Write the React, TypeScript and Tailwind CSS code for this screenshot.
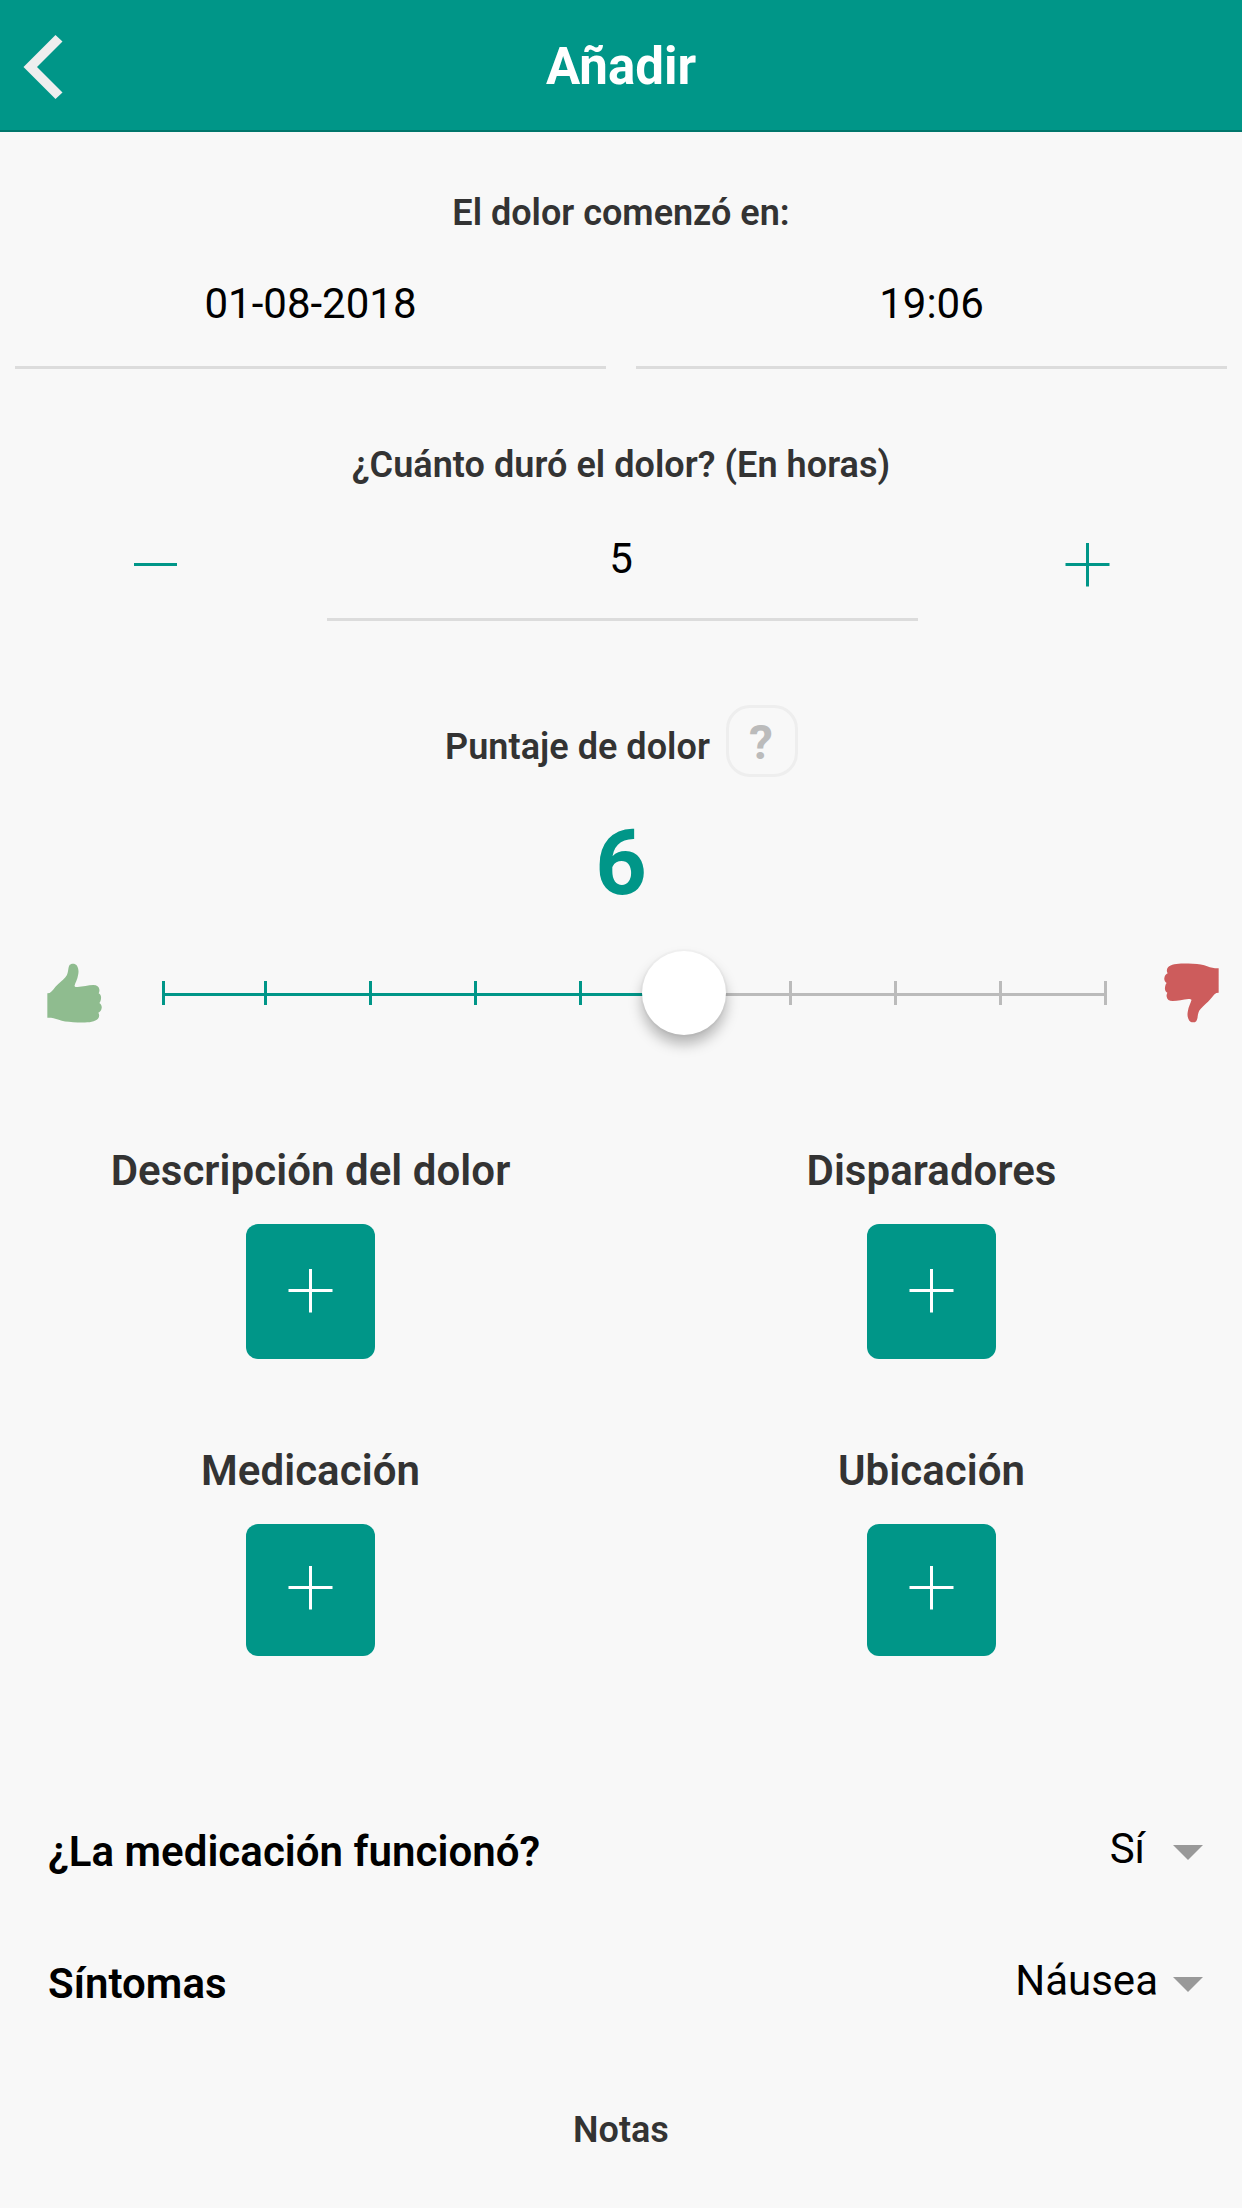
const THUMB =
  'M144 219L151 218C160 213 165 202 175 193C186 182 197 174 202 165C208 153 205 142 211 134C216 129 227 129 232 136C237 144 238 154 236 163C234 178 227 188 225 197C226 200 229 200 234 200C250 198 266 195 281 194C292 194 298 199 299 207C300 212 299 215 297 219C303 222 305 228 304 235C303 241 302 245 299 248C304 251 307 257 306 263C305 270 301 275 296 277C300 282 299 290 295 295C285 306 260 307 235 306C215 305 200 304 187 301C175 297 165 293 155 292L144 292Z';

function Thumb({ className }: { className: string }) {
  return (
    <svg viewBox="143 129 164 178" className={`h-[60px] w-[55px] ${className}`} fill="currentColor">
      <path d={THUMB} />
    </svg>
  );
}

function Plus({ className = '' }: { className?: string }) {
  return (
    <svg viewBox="0 0 45 45" className={`size-[45px] ${className}`} stroke="currentColor" strokeWidth="3">
      <path d="M0.5 22.5H44.5M22.5 1V44.5" />
    </svg>
  );
}

function AddBlock({ title, className }: { title: string; className: string }) {
  return (
    <div className="flex flex-col items-center">
      <h2 className="text-[42px] leading-[48px] font-semibold tracking-[0.06px] text-[#333]">{title}</h2>
      <button className={`mt-[29px] flex w-[129px] justify-center rounded-xl bg-[#009688] text-white ${className}`}>
        <Plus />
      </button>
    </div>
  );
}

function SelectRow({ label, value, gap }: { label: string; value: string; gap: string }) {
  return (
    <div className="flex h-12 justify-between pr-[39px] pl-12 text-[42px] leading-[48px] text-black">
      <span className="font-semibold tracking-[0.04px]">{label}</span>
      <div className={`flex ${gap}`}>
        <span className="-mt-[3px]">{value}</span>
        <svg viewBox="0 0 30 15" className="mt-[17px] h-[15px] w-[30px]" fill="#999">
          <path d="M0 0H30L15 15Z" />
        </svg>
      </div>
    </div>
  );
}

const TICKS = [162, 264, 369, 474, 579, 684, 789, 894, 999, 1104];

export default function App() {
  return (
    <div className="h-[2208px] w-[1242px] overflow-hidden bg-[#f8f8f8] font-['Roboto',sans-serif]">
      <header className="grid h-[132px] grid-cols-[1fr_auto_1fr] items-center border-b-2 border-[#00776c] bg-[#009688]">
        <svg viewBox="0 0 40 64" className="mt-1 ml-[23px] h-16 w-10" fill="#eee">
          <path d="M32.5 0L39.5 6.5L14 32L39.5 57.5L32.5 64L0.5 32Z" />
        </svg>
        <h1 className="mt-1 text-[51px] leading-[60px] font-bold text-white">Añadir</h1>
      </header>

      <h2 className="mt-[57px] text-center text-[36px] leading-[48px] font-semibold text-[#333]">
        El dolor comenzó en:
      </h2>
      <div className="mt-[43px] grid grid-cols-2 gap-[30px] px-[15px] text-center text-[42px] leading-[48px] text-black">
        <div className="border-b-[3px] border-[#dcdcdc] pb-[38px]">01-08-2018</div>
        <div className="border-b-[3px] border-[#dcdcdc] pb-[38px]">19:06</div>
      </div>

      <h2 className="mt-[72px] text-center text-[36px] leading-[48px] font-semibold tracking-[0.05px] text-[#333]">
        ¿Cuánto duró el dolor? (En horas)
      </h2>
      <div className="mt-[46px] grid grid-cols-[327px_591px_324px] text-center text-[42px] leading-[48px] text-black">
        <div className="flex justify-center pt-7 pr-4">
          <div className="h-[3px] w-[43px] bg-[#009688]" />
        </div>
        <div className="border-b-[3px] border-[#dcdcdc] pr-[3px] pb-[35px]">5</div>
        <div className="flex pt-[7px] pl-[147px] text-[#009688]">
          <Plus />
        </div>
      </div>

      <div className="mt-[84px] flex justify-center gap-4 pl-px">
        <h2 className="mt-[18px] text-[36px] leading-[48px] font-semibold tracking-[0.04px] text-[#333]">
          Puntaje de dolor
        </h2>
        <button className="flex size-[72px] justify-center rounded-3xl border-[3px] border-[#eee] pt-[3px] pr-0.5 text-[48px] leading-[64px] font-bold text-[#bbb]">
          ?
        </button>
      </div>
      <div className="mt-[39px] text-center text-[90px] leading-[96px] font-bold text-[#009688]">6</div>

      <div className="mt-[39px] flex h-[84px] pt-3">
        <Thumb className="ml-[47px]  text-[#8fbc8f]" />
        <div className="relative -mt-3 ml-[60px] h-[84px] w-[945px]">
          <div className="absolute top-[42px] left-0 h-[3px] w-[522px] bg-[#009688]" />
          <div className="absolute top-[42px] left-[522px] h-[3px] w-[423px] bg-[#bbb]" />
          {TICKS.map((x) => (
            <div
              key={x}
              className={`absolute top-[30px] h-6 w-[3px] ${x < 684 ? 'bg-[#009688]' : 'bg-[#bbb]'}`}
              style={{ left: x - 162 }}
            />
          ))}
          <div className="absolute top-0 left-[480px] size-[84px] rounded-full bg-white shadow-[0_0_0_2px_rgba(0,0,0,0.02),0_9px_14px_rgba(0,0,0,0.28)]" />
        </div>
        <Thumb className="ml-[57px] rotate-180 text-[#cd5c5c]" />
      </div>

      <div className="mt-[112px] grid grid-cols-2 gap-y-[88px]">
        <AddBlock title="Descripción del dolor" className="h-[135px] pt-[44px]" />
        <AddBlock title="Disparadores" className="h-[135px] pt-[44px]" />
        <AddBlock title="Medicación" className="h-[132px] pt-[41px]" />
        <AddBlock title="Ubicación" className="h-[132px] pt-[41px]" />
      </div>

      <div className="mt-[172px] flex flex-col gap-[84px]">
        <SelectRow label="¿La medicación funcionó?" value="Sí" gap="gap-7" />
        <SelectRow label="Síntomas" value="Náusea" gap="gap-[15px]" />
      </div>

      <h2 className="mt-[98px] text-center text-[36px] leading-[48px] font-semibold text-[#333]">Notas</h2>
    </div>
  );
}
